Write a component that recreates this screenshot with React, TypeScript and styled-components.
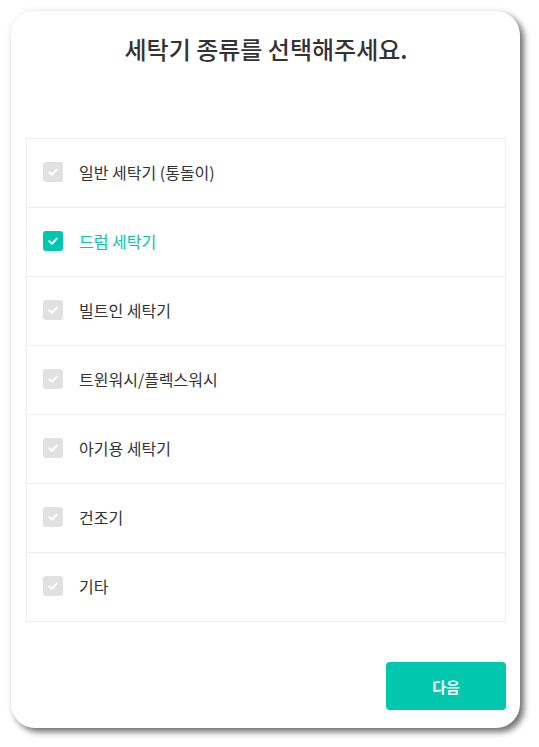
import React, { useState } from "react";
import styled, { createGlobalStyle } from "styled-components";

const Global = createGlobalStyle`
  html, body { margin: 0; padding: 0; background: #ffffff; }
  body { font-family: "Noto Sans CJK KR", "Noto Sans", sans-serif; }
  * { box-sizing: border-box; }
`;

const Page = styled.div`
  padding: 11px 19px 19px 11px;
`;

const Card = styled.div`
  width: 509px;
  height: 717px;
  background: #fff;
  border-radius: 24px;
  box-shadow: 4px 4px 6px rgba(0, 0, 0, 0.55), 0 0 8px rgba(0, 0, 0, 0.06);
  padding: 22px 14px 18px 15px;
  display: flex;
  flex-direction: column;
`;

const Title = styled.h1`
  margin: 0;
  font-size: 24px;
  line-height: 32px;
  font-weight: 500;
  color: #333;
  text-align: center;
`;

const List = styled.ul`
  list-style: none;
  margin: 73px 0 0;
  padding: 0;
  border: 1px solid #eeeeee;
`;

const Row = styled.li<{ $active: boolean }>`
  height: 69px;
  display: flex;
  align-items: center;
  gap: 16px;
  padding-left: 16px;
  padding-bottom: 2px;
  border-top: 1px solid #eeeeee;
  &:first-child { border-top: none; height: 68px; }
  font-size: 16px;
  color: ${(p) => (p.$active ? "#00c7ae" : "#333")};
  font-weight: 400;
  cursor: pointer;
`;

const Box = styled.span<{ $active: boolean }>`
  width: 20px;
  height: 20px;
  border-radius: 3px;
  background: ${(p) => (p.$active ? "#00c7ae" : "#e1e1e1")};
  display: flex;
  align-items: center;
  justify-content: center;
  flex-shrink: 0;
`;

const Footer = styled.div`
  margin-top: auto;
  display: flex;
  justify-content: flex-end;
`;

const NextButton = styled.button`
  width: 120px;
  height: 48px;
  border: none;
  border-radius: 4px;
  background: #00c7ae;
  color: #fff;
  font-family: inherit;
  font-size: 15px;
  font-weight: 700;
`;

const items = [
  "일반 세탁기 (통돌이)",
  "드럼 세탁기",
  "빌트인 세탁기",
  "트윈워시/플렉스워시",
  "아기용 세탁기",
  "건조기",
  "기타",
];

const Check = () => (
  <svg width="12" height="12" viewBox="0 0 12 12">
    <path d="M2.2 6.2 L4.9 8.7 L9.8 3.6" fill="none" stroke="#fff" strokeWidth="2" strokeLinecap="round" strokeLinejoin="round" />
  </svg>
);

export default function App() {
  const [sel, setSel] = useState(1);
  return (
    <Page>
      <Global />
      <Card>
        <Title>세탁기 종류를 선택해주세요.</Title>
        <List>
          {items.map((t, i) => (
            <Row key={t} $active={i === sel} onClick={() => setSel(i)}>
              <Box $active={i === sel}>
                <Check />
              </Box>
              {t}
            </Row>
          ))}
        </List>
        <Footer>
          <NextButton>다음</NextButton>
        </Footer>
      </Card>
    </Page>
  );
}
